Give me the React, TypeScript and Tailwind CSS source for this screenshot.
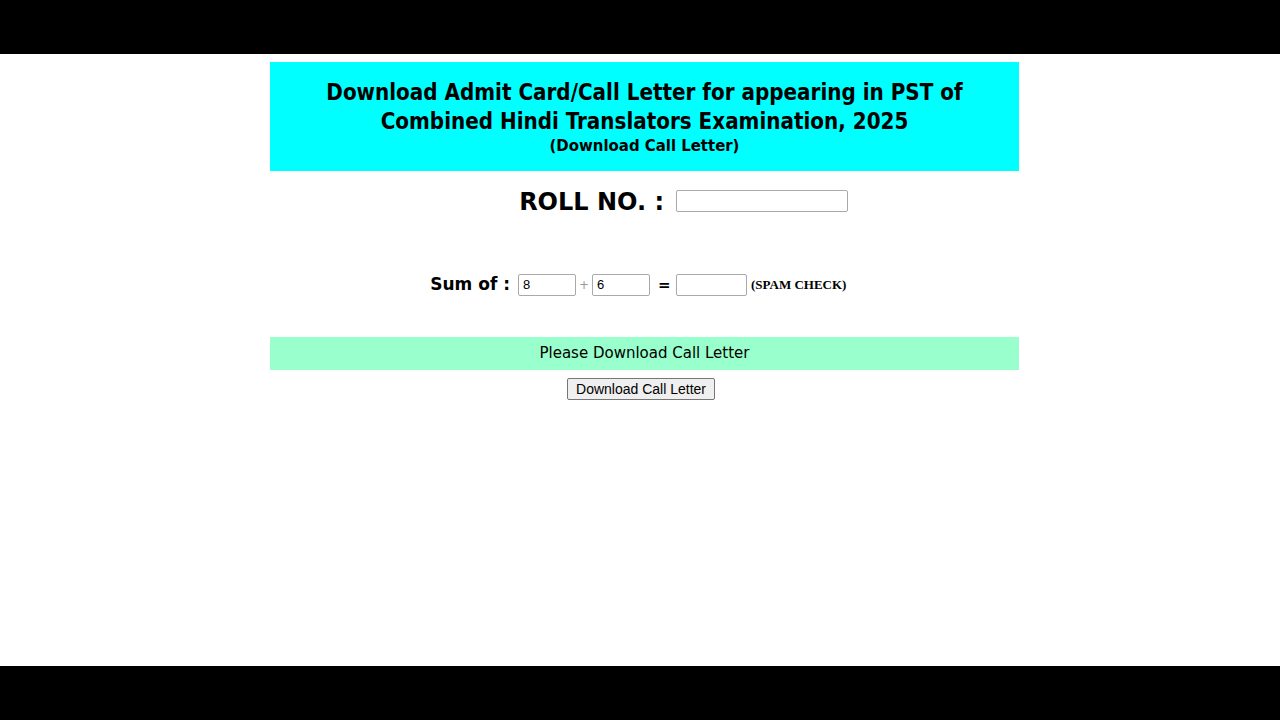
export default function App() {
  return (
    <div className="flex h-[720px] w-[1280px] flex-col bg-white">
      <div className="h-[54px] bg-black" />
      <div className="flex-1">
        <div className="ml-[270px] mt-2 w-[749px]">
          <div className="flex h-[109px] flex-col items-center justify-center bg-[#00ffff] text-center font-['DejaVu_Sans_Condensed','DejaVu_Sans',sans-serif] font-bold text-black">
            <h1 className="text-[22.2px] leading-[29px]">
              Download Admit Card/Call Letter for appearing in PST of
              <br />
              Combined Hindi Translators Examination, 2025
            </h1>
            <p className="text-[16.6px] leading-[20px]">(Download Call Letter)</p>
          </div>

          <div className="mt-[15px] grid grid-cols-[398px_1fr] items-center gap-x-2 gap-y-[58px]">
            <div className="flex justify-end pr-1 pt-1 font-['Comic_Sans_MS','DejaVu_Sans',sans-serif] text-[24px] font-bold leading-[24px]">
              ROLL NO. :
            </div>
            <div>
              <input className="h-[22px] w-[172px] rounded-[2px] border border-[#a9a9a9] bg-white px-1 text-[13px]" />
            </div>

            <div className="flex items-center justify-end font-['Comic_Sans_MS','DejaVu_Sans',sans-serif] text-[17px] font-bold">
              <span className="mr-[8px]">Sum of :</span>
              <input
                readOnly
                value="8"
                className="h-[22px] w-[58px] rounded-[2px] border border-[#a9a9a9] bg-white px-1 font-['Liberation_Sans',sans-serif] text-[13px] font-normal"
              />
              <span className="w-[16px] text-center text-[12px] font-normal text-[#999]">+</span>
              <input
                readOnly
                value="6"
                className="h-[22px] w-[58px] rounded-[2px] border border-[#a9a9a9] bg-white px-1 font-['Liberation_Sans',sans-serif] text-[13px] font-normal"
              />
              <span className="ml-[8px] w-[10px] text-[15px]">=</span>
            </div>
            <div className="flex items-center gap-1">
              <input className="h-[22px] w-[71px] rounded-[2px] border border-[#a9a9a9] bg-white px-1 text-[13px]" />
              <span className="font-['Liberation_Serif',serif] text-[13px] font-bold">(SPAM CHECK)</span>
            </div>
          </div>

          <div className="mt-[39px] flex h-[33px] items-center justify-center bg-[#99ffcc] font-['Comic_Sans_MS','DejaVu_Sans',sans-serif] text-[15px] text-black">
            Please Download Call Letter
          </div>
          <div className="mt-2 flex justify-center pr-[7px]">
            <button className="h-[22px] w-[148px] rounded-[2px] border border-[#767676] bg-[#efefef] font-['Liberation_Sans',sans-serif] text-[14px] text-black">
              Download Call Letter
            </button>
          </div>
        </div>
      </div>
      <div className="h-[54px] bg-black" />
    </div>
  );
}
